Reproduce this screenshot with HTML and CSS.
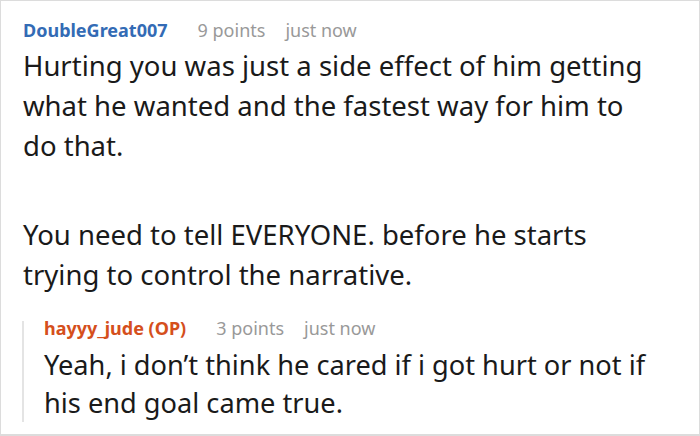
FILE: index.html
```html
<!DOCTYPE html>
<html>
<head>
<meta charset="utf-8">
<link rel="stylesheet" href="styles.css">
</head>
<body>
<div class="frame">
  <div class="comment">
    <div class="meta">
      <span class="author">DoubleGreat007</span>
      <span class="points">9 points</span>
      <span class="time">just now</span>
    </div>
    <div class="body">
      <p>Hurting you was just a side effect of him getting what he wanted and the fastest way for him to do that.</p>
      <p>You need to tell EVERYONE. before he starts trying to control the narrative.</p>
    </div>
    <div class="reply">
      <div class="meta">
        <span class="author op">hayyy_jude (OP)</span>
        <span class="points">3 points</span>
        <span class="time">just now</span>
      </div>
      <div class="body">
        <p>Yeah, i don’t think he cared if i got hurt or not if his end goal came true.</p>
      </div>
    </div>
  </div>
</div>
</body>
</html>
```

FILE: styles.css
```css
html, body {
  margin: 0;
  padding: 0;
  background: #fff;
}
.frame {
  width: 700px;
  height: 436px;
  box-sizing: border-box;
  border: 1px solid #dcdcdc;
  border-bottom-width: 2px;
  overflow: hidden;
  font-family: "Noto Sans", "Open Sans", sans-serif;
  color: #1a1a1a;
}
.comment {
  padding: 17px 40px 0 22px;
}
.meta {
  display: flex;
  align-items: baseline;
  font-size: 18px;
  line-height: 24px;
  color: #999;
}
.author {
  font-weight: 700;
  color: #336bb5;
  margin-right: 30px;
}
.author.op {
  color: #d54f1c;
}
.points {
  margin-right: 20px;
}
.body {
  font-size: 27.5px;
  line-height: 40px;
  margin-top: 4px;
}
.body p {
  margin: 0;
}
.body p + p {
  margin-top: 49px;
}
.reply {
  margin-top: 26px;
  margin-left: -1px;
  border-left: 2px solid #e4e4e4;
  padding-left: 20px;
}
.reply .meta {
  line-height: 14px;
}
.reply .body {
  font-size: 27.2px;
  line-height: 38px;
  margin-top: 11px;
  margin-bottom: -6px;
}
```
